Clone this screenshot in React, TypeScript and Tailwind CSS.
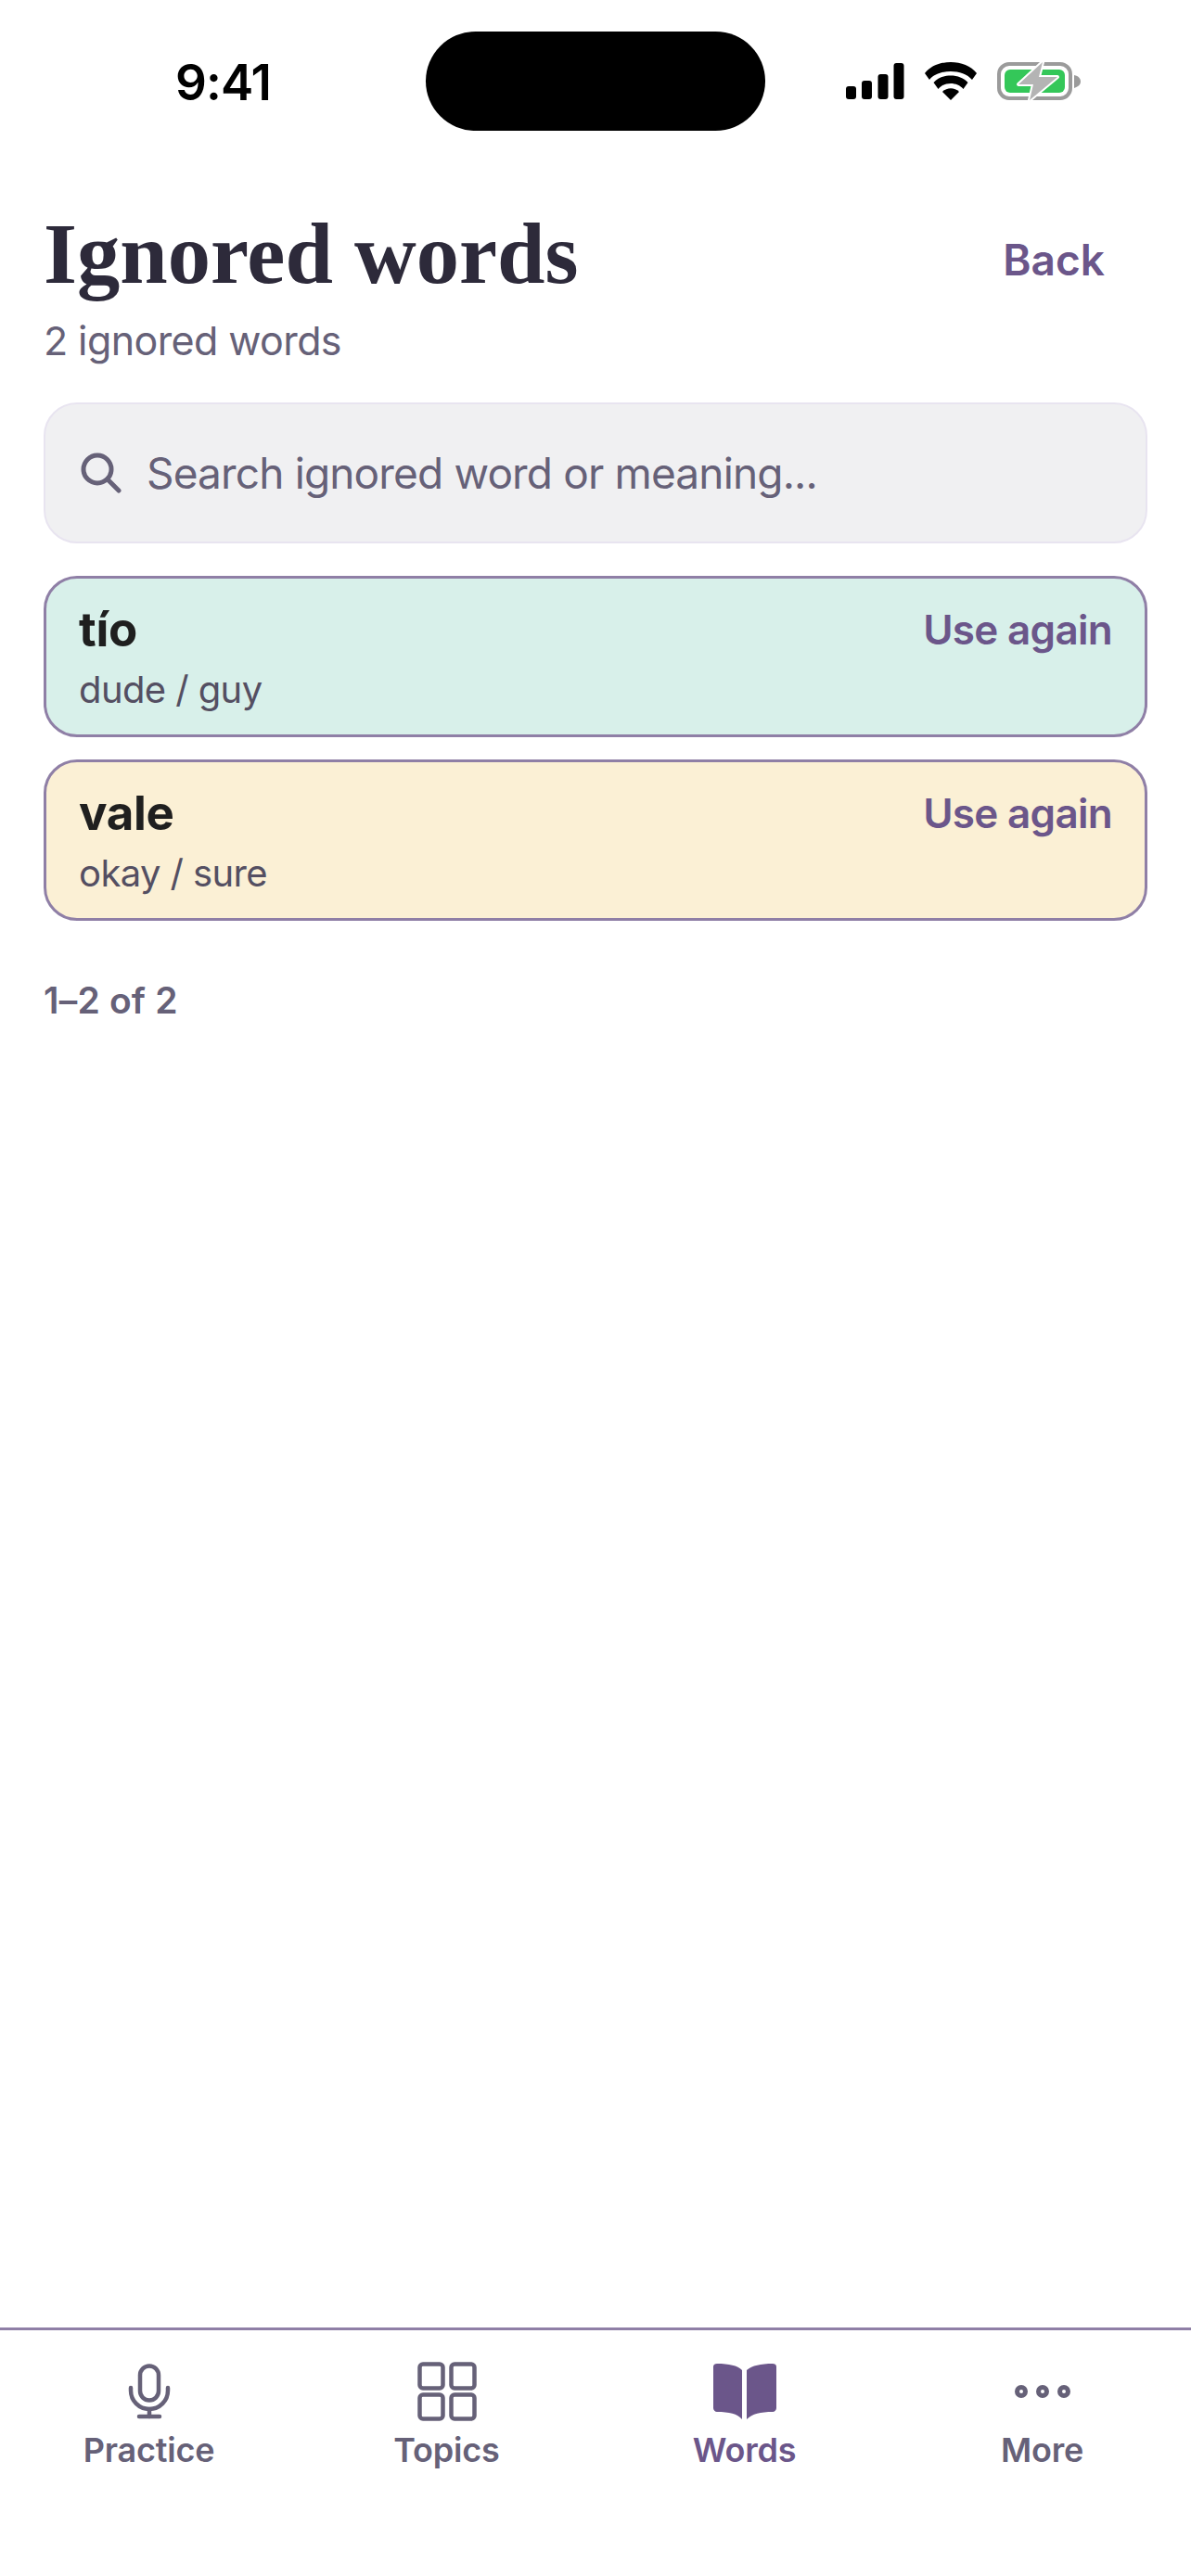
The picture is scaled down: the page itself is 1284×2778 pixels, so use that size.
const sans = "font-['Inter',sans-serif]";

const words = [
  { word: "tío", meaning: "dude / guy", bg: "bg-[#d8f0ea]" },
  { word: "vale", meaning: "okay / sure", bg: "bg-[#fbf0d5]" },
];

function StatusIcons() {
  return (
    <svg width="256" height="44" viewBox="0 0 256 44" className="block overflow-visible">
      {/* signal */}
      <rect x="1" y="27" width="11" height="14" rx="3" fill="#000" />
      <rect x="18" y="21" width="11" height="20" rx="3" fill="#000" />
      <rect x="35.5" y="14" width="11" height="27" rx="3" fill="#000" />
      <rect x="52.5" y="2" width="11" height="39" rx="3" fill="#000" />
      {/* wifi */}
      <path d="M86 13 C98 -3 130 -3 142 13 L137 20 C127 8 101 8 91 20 Z" fill="#000" />
      <path d="M95.5 23 C104 13 124 13 132.5 23 L127.5 30 C121 22 107 22 100.5 30 Z" fill="#000" />
      <path d="M105 33 C110 28 118 28 123 33 L114 42 Z" fill="#000" />
      {/* battery */}
      <rect x="166" y="3" width="77" height="37" rx="11" fill="none" stroke="#9b9b9b" strokeWidth="4" />
      <rect x="172" y="9" width="65" height="25" rx="6" fill="#34c759" />
      <path d="M247 15 C252 16 254 19 254 22 C254 25 252 27 247 29 Z" fill="#9b9b9b" />
      <path d="M213 1 L187 25 L203 25 L199 42 L229 17 L209 17 Z" fill="#b4b4b4" stroke="#fff" strokeWidth="4" paintOrder="stroke" strokeLinejoin="round" />
    </svg>
  );
}

function SearchIcon() {
  return (
    <svg width="44" height="44" viewBox="0 0 44 44" fill="none" stroke="#666178" strokeWidth="5" strokeLinecap="round">
      <circle cx="18" cy="18" r="15" />
      <path d="M29 29 L41 41" />
    </svg>
  );
}

function MicIcon() {
  return (
    <svg width="46" height="60" viewBox="0 0 46 60" fill="none" stroke="#666178" strokeWidth="4.5" strokeLinecap="round">
      <rect x="13" y="2.5" width="20" height="37" rx="10" />
      <path d="M3 26 V29 A20 20 0 0 0 43 29 V26" />
      <path d="M23 49 V57" />
      <path d="M12 57 H34" />
    </svg>
  );
}

function TopicsIcon() {
  return (
    <svg width="64" height="64" viewBox="0 0 64 64" fill="none" stroke="#666178" strokeWidth="4.5">
      <rect x="2.5" y="2.5" width="25" height="26" rx="3.5" />
      <rect x="36.5" y="2.5" width="25" height="26" rx="3.5" />
      <rect x="2.5" y="35.5" width="25" height="26" rx="3.5" />
      <rect x="36.5" y="35.5" width="25" height="26" rx="3.5" />
    </svg>
  );
}

function BookIcon() {
  return (
    <svg width="70" height="60" viewBox="0 0 70 60" fill="#6b568a">
      <path d="M1 3 C1 1 3 0 5 0 C18 0 27 2 32 7 L32 60 C27 54 18 52 5 52 C3 52 1 50 1 48 Z" />
      <path d="M69 3 C69 1 67 0 65 0 C52 0 43 2 37 7 L37 60 C43 54 52 52 65 52 C67 52 69 50 69 48 Z" />
    </svg>
  );
}

function DotsIcon() {
  return (
    <svg width="60" height="18" viewBox="0 0 60 18" fill="none" stroke="#666178" strokeWidth="5">
      <circle cx="7" cy="9" r="4.5" />
      <circle cx="30" cy="9" r="4.5" />
      <circle cx="53" cy="9" r="4.5" />
    </svg>
  );
}

const tabs = [
  { label: "Practice", icon: <MicIcon /> },
  { label: "Topics", icon: <TopicsIcon /> },
  { label: "Words", icon: <BookIcon />, active: true },
  { label: "More", icon: <DotsIcon /> },
];

export default function App() {
  return (
    <div className={`h-[2778px] w-[1284px] bg-white flex flex-col ${sans}`}>
      {/* status bar */}
      <div className="h-[226px] shrink-0 flex items-start">
        <div className="w-[459px] pt-[60px] flex justify-center pl-[22px]">
          <span className="text-[53px] leading-[58px] font-semibold tracking-[-1px] text-black">9:41</span>
        </div>
        <div className="w-[366px] h-[107px] mt-[34px] rounded-full bg-black" />
        <div className="pl-[86px] pt-[66px]">
          <StatusIcons />
        </div>
      </div>

      <main className="flex-1 px-[47px] flex flex-col">
        <div className="flex items-start justify-between">
          <div>
            <h1 className="font-['Liberation_Serif',serif] font-bold text-[92.5px] leading-[96px] text-[#2d2a3a]">Ignored words</h1>
            <p className="mt-[17px] text-[43px] leading-[56px] tracking-[-0.6px] text-[#666178]">2 ignored words</p>
          </div>
          <span className="mt-[26px] mr-[46px] text-[46px] leading-[56px] font-semibold text-[#6b568a]">Back</span>
        </div>

        <div className="mt-[39px] h-[152px] rounded-[36px] bg-[#f0f0f2] border-2 border-[#e8e4f0] flex items-center gap-[27px] pl-[38px]">
          <SearchIcon />
          <span className="text-[46px] tracking-[-0.85px] text-[#666178]">Search ignored word or meaning...</span>
        </div>

        <div className="mt-[35px] flex flex-col gap-[24px]">
          {words.map((w) => (
            <div key={w.word} className={`h-[174px] rounded-[36px] border-[3px] border-[#8f7fa6] ${w.bg} px-[35px] flex justify-between pt-[23px]`}>
              <div>
                <div className="text-[51px] leading-[64px] font-bold tracking-[-0.3px] text-[#1f1f1f]">{w.word}</div>
                <div className="text-[40px] leading-[52px] mt-[7px] tracking-[-0.6px] text-[#544f62]">{w.meaning}</div>
              </div>
              <span className="text-[44px] leading-[64px] font-semibold tracking-[-0.7px] text-[#6b568a]">Use again</span>
            </div>
          ))}
        </div>

        <p className="mt-[61px] text-[39px] leading-[50px] font-semibold tracking-[0.2px] text-[#666178]">1–2 of 2</p>
      </main>

      {/* tab bar */}
      <nav className="h-[268px] shrink-0 border-t-[3px] border-[#8f7fa6] grid grid-cols-4 items-start pt-[31px]">
        {tabs.map((t) => (
          <div key={t.label} className="flex flex-col items-center">
            <div className="h-[70px] flex items-center justify-center">{t.icon}</div>
            <span className={`mt-[4px] text-[36px] leading-[48px] font-semibold tracking-[-0.2px] ${t.active ? "text-[#6b568a]" : "text-[#666178]"}`}>
              {t.label}
            </span>
          </div>
        ))}
      </nav>
    </div>
  );
}
